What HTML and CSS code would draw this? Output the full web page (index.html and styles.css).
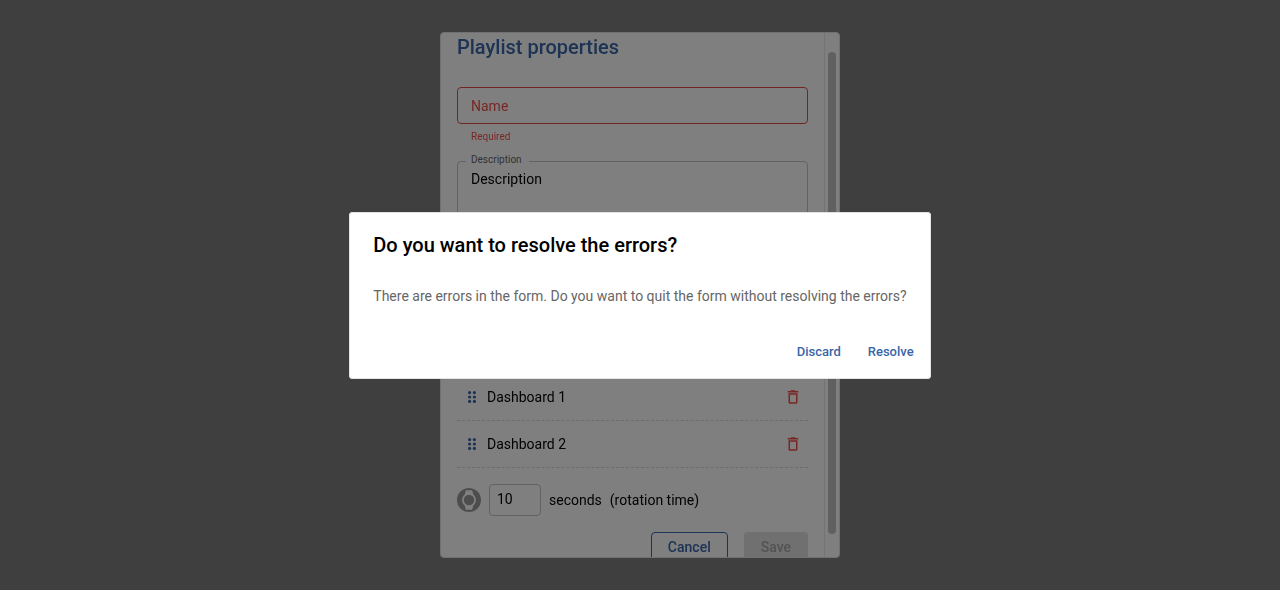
FILE: index.html
```
<!DOCTYPE html>
<html lang="en">
<head>
<meta charset="utf-8">
<title>Playlist properties</title>
<link rel="stylesheet" href="styles.css">
</head>
<body>
<svg class="sprite" aria-hidden="true">
  <symbol id="icon-drag" viewBox="0 0 8 12">
    <circle cx="1.6" cy="1.6" r="1.6"/><circle cx="6.4" cy="1.6" r="1.6"/>
    <circle cx="1.6" cy="6" r="1.6"/><circle cx="6.4" cy="6" r="1.6"/>
    <circle cx="1.6" cy="10.4" r="1.6"/><circle cx="6.4" cy="10.4" r="1.6"/>
  </symbol>
  <symbol id="icon-delete" viewBox="0 0 24 24">
    <path d="M6 19c0 1.1.9 2 2 2h8c1.1 0 2-.9 2-2V7H6v12zM8 9h8v10H8V9zm7.5-5l-1-1h-5l-1 1H5v2h14V4z"/>
  </symbol>
</svg>

<div class="backdrop">
  <section class="panel" role="dialog" aria-labelledby="panel-title">
    <form class="panel-body">
      <h2 class="panel-title" id="panel-title">Playlist properties</h2>
      <div class="field">
        <input class="name-input" id="name" type="text" placeholder="Name" aria-label="Name" aria-describedby="name-error">
        <p class="error-text" id="name-error">Required</p>
      </div>
      <div class="field description-field">
        <label class="field-label" for="description">Description</label>
        <textarea class="description-input" id="description">Description</textarea>
      </div>
      <ul class="dashboards">
        <li class="dashboard">
          <svg class="drag-icon"><use href="#icon-drag"/></svg>
          <span class="dashboard-name">Dashboard 1</span>
          <button class="icon-button" type="button" aria-label="Delete"><svg class="delete-icon"><use href="#icon-delete"/></svg></button>
        </li>
        <li class="dashboard">
          <svg class="drag-icon"><use href="#icon-drag"/></svg>
          <span class="dashboard-name">Dashboard 2</span>
          <button class="icon-button" type="button" aria-label="Delete"><svg class="delete-icon"><use href="#icon-delete"/></svg></button>
        </li>
      </ul>
      <div class="rotation">
        <svg class="rotation-icon" viewBox="0 0 24 24">
          <circle class="rotation-disc" cx="12" cy="12" r="12"/>
          <path class="rotation-ring" d="M8.8 2.200h6.400l1 4.200c1.700 1.300 2.700 3.300 2.700 5.600s-1 4.300-2.700 5.600l-1 4.200H8.800l-1-4.200C6.100 16.300 5.100 14.300 5.100 12s1-4.300 2.700-5.600z"/>
          <circle class="rotation-disc" cx="12" cy="12" r="5.200"/>
        </svg>
        <input class="seconds-input" id="seconds" type="text" inputmode="numeric" value="10">
        <label for="seconds">seconds</label>
        <span>(rotation time)</span>
      </div>
      <div class="panel-actions">
        <button class="button button-outlined" type="button">Cancel</button>
        <button class="button button-disabled" type="submit" disabled>Save</button>
      </div>
    </form>
    <div class="scroll-track" aria-hidden="true"><div class="scroll-thumb"></div></div>
  </section>
</div>

<div class="backdrop">
  <section class="confirm" role="alertdialog" aria-labelledby="confirm-title" aria-describedby="confirm-text">
    <h2 class="confirm-title" id="confirm-title">Do you want to resolve the errors?</h2>
    <p class="confirm-text" id="confirm-text">There are errors in the form. Do you want to quit the form without resolving the errors?</p>
    <div class="confirm-actions">
      <button class="text-button" type="button">Discard</button>
      <button class="text-button" type="button">Resolve</button>
    </div>
  </section>
</div>
</body>
</html>
```
FILE: styles.css
```
* {
  box-sizing: border-box;
}

body {
  margin: 0;
  background: #fff;
  color: #000;
  font: 400 14px/20px Roboto, "Liberation Sans", sans-serif;
}

h2, p, ul {
  margin: 0;
  padding: 0;
}

button, input, textarea {
  font: inherit;
  color: inherit;
  margin: 0;
}

.sprite {
  display: none;
}

.backdrop {
  position: fixed;
  inset: 0;
  display: flex;
  align-items: center;
  justify-content: center;
  padding: 32px;
  background: rgba(0, 0, 0, 0.5);
}

.panel {
  display: flex;
  align-self: stretch;
  width: 100%;
  max-width: 400px;
  overflow: hidden;
  background: #fff;
  border: 1px solid #e3e3e3;
  border-radius: 4px;
}

.panel-body {
  flex: 1;
  display: flex;
  flex-direction: column;
  padding: 0 16px;
}

.panel-title {
  margin-bottom: 26px;
  color: #3a66a8;
  font-size: 20px;
  font-weight: 500;
  line-height: 28px;
}

.field {
  display: flex;
  flex-direction: column;
}

.name-input {
  height: 37px;
  padding: 0 13px;
  background: transparent;
  border: 1px solid #e44c46;
  border-radius: 4px;
}

.name-input::placeholder {
  color: #f04e4a;
  opacity: 1;
}

.error-text {
  margin: 5px 14px 0;
  color: #f04e4a;
  font-size: 10px;
  line-height: 16px;
}

.description-field {
  position: relative;
  margin-top: 16px;
}

.field-label {
  position: absolute;
  top: -9px;
  left: 9px;
  padding: 0 7px 0 5px;
  background: #fff;
  color: #666;
  font-size: 10px;
  line-height: 16px;
}

.description-input {
  height: 96px;
  padding: 7px 13px;
  resize: none;
  background: transparent;
  border: 1px solid #c4c4c4;
  border-radius: 4px;
}

.dashboards {
  margin-top: 117px;
  list-style: none;
}

.dashboard {
  display: flex;
  align-items: center;
  height: 47px;
  padding: 0 6px 0 11px;
  border-bottom: 1px dashed #d8d8d8;
}

.drag-icon {
  width: 8px;
  height: 12px;
  margin-right: 11px;
  fill: #3a66a8;
}

.dashboard-name {
  flex: 1;
}

.icon-button {
  display: flex;
  padding: 0;
  background: none;
  border: 0;
}

.delete-icon {
  width: 18px;
  height: 18px;
  fill: #f04e4a;
}

.rotation {
  display: flex;
  align-items: center;
  gap: 8px;
  margin: 16px 0;
}

.rotation-icon {
  width: 24px;
  height: 24px;
}

.rotation-disc {
  fill: #9b9b9b;
}

.rotation-ring {
  fill: #fff;
}

.seconds-input {
  width: 52px;
  height: 32px;
  padding: 0 7px 2px;
  background: transparent;
  border: 1px solid #c4c4c4;
  border-radius: 4px;
}

.panel-actions {
  display: flex;
  justify-content: flex-end;
  gap: 16px;
}

.button {
  height: 30px;
  padding: 0 16px;
  border: 1px solid transparent;
  border-radius: 4px;
  font-weight: 500;
}

.button-outlined {
  background: transparent;
  border-color: #3a66a8;
  color: #3a66a8;
}

.button-disabled {
  background: #e0e0e0;
  color: #a6a6a6;
}

.scroll-track {
  width: 15px;
  padding: 19px 3px 23px;
  border-left: 1px solid #e8e8e8;
}

.scroll-thumb {
  width: 8px;
  height: 100%;
  background: #c1c1c1;
  border-radius: 4px;
}

.confirm {
  background: #fff;
  border-radius: 4px;
  box-shadow: inset 0 0 0 1px #e3e3e3;
}

.confirm-title {
  padding: 17px 24px 16px;
  font-size: 20px;
  font-weight: 500;
  line-height: 32px;
}

.confirm-text {
  padding: 8px 24px 20px;
  color: #666;
  line-height: 22px;
}

.confirm-actions {
  display: flex;
  justify-content: flex-end;
  gap: 8px;
  padding: 8px 8px 10px;
}

.text-button {
  min-width: 64px;
  height: 34px;
  padding: 0 8px;
  background: none;
  border: 0;
  border-radius: 4px;
  color: #3a66a8;
  font-size: 13px;
  font-weight: 500;
}
```
